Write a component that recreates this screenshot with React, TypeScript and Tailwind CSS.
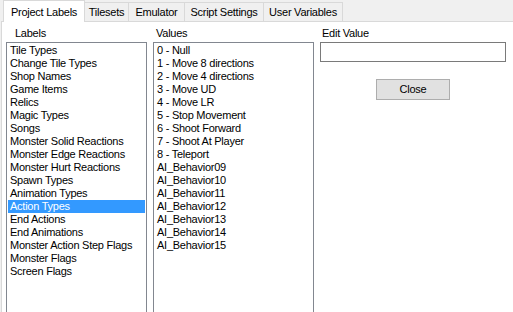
import { useState } from 'react';

const tabs = [
  { name: 'Project Labels', w: 'w-[82px]' },
  { name: 'Tilesets', w: 'w-[45px]' },
  { name: 'Emulator', w: 'w-[57px]' },
  { name: 'Script Settings', w: 'w-[80px]' },
  { name: 'User Variables', w: 'w-[80px]' },
];

const labels = [
  'Tile Types',
  'Change Tile Types',
  'Shop Names',
  'Game Items',
  'Relics',
  'Magic Types',
  'Songs',
  'Monster Solid Reactions',
  'Monster Edge Reactions',
  'Monster Hurt Reactions',
  'Spawn Types',
  'Animation Types',
  'Action Types',
  'End Actions',
  'End Animations',
  'Monster Action Step Flags',
  'Monster Flags',
  'Screen Flags',
];

const values = [
  '0 - Null',
  '1 - Move 8 directions',
  '2 - Move 4 directions',
  '3 - Move UD',
  '4 - Move LR',
  '5 - Stop Movement',
  '6 - Shoot Forward',
  '7 - Shoot At Player',
  '8 - Teleport',
  'AI_Behavior09',
  'AI_Behavior10',
  'AI_Behavior11',
  'AI_Behavior12',
  'AI_Behavior13',
  'AI_Behavior14',
  'AI_Behavior15',
];

export default function App() {
  const [activeTab, setActiveTab] = useState(0);
  const [selectedLabel, setSelectedLabel] = useState(12);
  const [selectedValue, setSelectedValue] = useState<number | null>(null);
  const [editValue, setEditValue] = useState('');

  return (
    <div
      className="w-[513px] h-[312px] overflow-hidden bg-[#f0f0f0] text-black text-[11px] tracking-[-0.25px] flex flex-col"
      style={{ fontFamily: '"Liberation Sans", Arial, sans-serif' }}
    >
      {/* window edge */}
      <div className="h-[2px] bg-[#3f3f3f]" />

      {/* tab strip */}
      <div className="h-[21px] flex items-end pl-[3px]">
        {tabs.map((t, i) =>
          i === activeTab ? (
            <button
              key={t.name}
              onClick={() => setActiveTab(i)}
              className={
                t.w +
                ' relative z-10 h-[22px] -mb-px bg-white border border-b-0 border-[#d9d9d9] leading-[18px] text-center ' +
                (i > 0 ? '-ml-px' : '')
              }
            >
              {t.name}
            </button>
          ) : (
            <button
              key={t.name}
              onClick={() => setActiveTab(i)}
              className={
                t.w +
                ' h-[19px] bg-[#f0f0f0] border border-b-0 border-[#d9d9d9] leading-[17px] pt-px text-center ' +
                (i > 0 ? '-ml-px' : '')
              }
            >
              {t.name}
            </button>
          )
        )}
      </div>

      {/* tab page */}
      <div className="flex-1 ml-px bg-white border-t border-l border-[#d9d9d9] flex pl-[4px] pt-[5px] gap-[6px]">
        {/* Labels */}
        <div className="w-[141px] flex flex-col">
          <div className="h-[13px] leading-[13px] pl-[9px]">Labels</div>
          <div className="mt-[2px] h-[280px] border border-[#828790] p-px">
            {labels.map((l, i) => (
              <div
                key={l}
                onClick={() => setSelectedLabel(i)}
                className={
                  'h-[13px] leading-[13px] pl-[2px] whitespace-nowrap ' +
                  (i === selectedLabel ? 'bg-[#3399ff] text-white' : '')
                }
              >
                {l}
              </div>
            ))}
          </div>
        </div>

        {/* Values */}
        <div className="w-[161px] flex flex-col">
          <div className="h-[13px] leading-[13px] pl-[3px]">Values</div>
          <div className="mt-[2px] h-[280px] border border-[#828790] p-px">
            {values.map((v, i) => (
              <div
                key={v}
                onClick={() => setSelectedValue(i)}
                className={
                  'h-[13px] leading-[13px] pl-[2px] whitespace-nowrap ' +
                  (i === selectedValue ? 'bg-[#3399ff] text-white' : '')
                }
              >
                {v}
              </div>
            ))}
          </div>
        </div>

        {/* Edit */}
        <div className="w-[186px] flex flex-col">
          <div className="h-[13px] leading-[13px] pl-[2px]">Edit Value</div>
          <input
            value={editValue}
            onChange={(e) => setEditValue(e.target.value)}
            className="mt-[2px] h-[20px] w-full border border-[#7a7a7a] px-[2px] outline-none bg-white"
          />
          <div className="flex justify-center mt-[17px]">
            <button className="w-[74px] h-[21px] bg-[#e1e1e1] border border-[#adadad] leading-[19px]">
              Close
            </button>
          </div>
        </div>
      </div>
    </div>
  );
}
